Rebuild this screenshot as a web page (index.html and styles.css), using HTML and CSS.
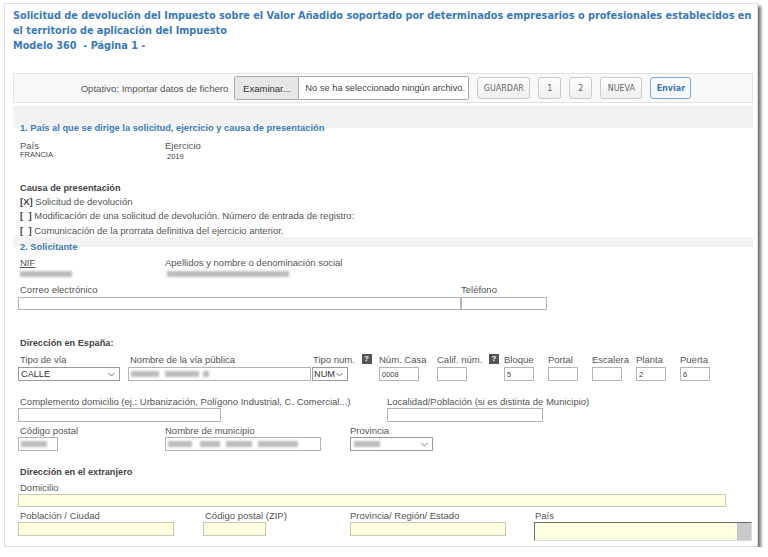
FILE: index.html
```html
<!DOCTYPE html>
<html lang="es">
<head>
<meta charset="utf-8">
<title>Modelo 360</title>
<link rel="stylesheet" href="styles.css">
</head>
<body>
<div class="frame">
  <div class="title">
    <div class="tline">Solicitud de devolución del Impuesto sobre el Valor Añadido soportado por determinados empresarios o profesionales establecidos en</div>
    <div class="tline">el territorio de aplicación del Impuesto</div>
    <div class="tline">Modelo 360 &nbsp;- Página 1 -</div>
  </div>

  <div class="toolbar">
    <span class="tb-label">Optativo: Importar datos de fichero</span>
    <div class="filebox"><span class="filebtn">Examinar...</span><span class="filetext">No se ha seleccionado ningún archivo.</span></div>
    <span class="btn w53">GUARDAR</span>
    <span class="btn w23">1</span>
    <span class="btn w23">2</span>
    <span class="btn w42">NUEVA</span>
    <span class="btn btn-primary w41">Enviar</span>
  </div>

  <div class="band band1"><span class="legend">1. País al que se dirige la solicitud, ejercicio y causa de presentación</span></div>
  <div class="content">
    <div class="grid-pais">
      <div class="lbl">País</div>
      <div class="lbl lbl0">Ejercicio</div>
      <div class="val">FRANCIA</div>
      <div class="val val2 lbl0">2019</div>
    </div>
    <div class="bold causa">Causa de presentación</div>
    <div class="opt"><b class="mark">[X]</b> Solicitud de devolución</div>
    <div class="opt"><b class="mark">[&nbsp; ]</b> Modificación de una solicitud de devolución. Número de entrada de registro:</div>
    <div class="opt"><b class="mark">[&nbsp; ]</b> Comunicación de la prorrata definitiva del ejercicio anterior.</div>
  </div>

  <div class="band band2"><span class="legend">2. Solicitante</span></div>
  <div class="content">
    <div class="grid-nif">
      <div class="lbl"><u>NIF</u></div>
      <div class="lbl lbl0">Apellidos y nombre o denominación social</div>
      <div class="blurrow"><span class="blur" style="width:52px"></span></div>
      <div class="blurrow lbl0"><span class="blur" style="width:122px"></span></div>
    </div>
    <div class="grid-mail">
      <div class="lbl">Correo electrónico</div>
      <div class="lbl lbl0">Teléfono</div>
      <div class="inp w443"></div>
      <div class="inp w86"></div>
    </div>

    <div class="bold sub1">Dirección en España:</div>
    <div class="grid-dir">
      <div class="lbl">Tipo de vía</div>
      <div class="lbl">Nombre de la vía pública</div>
      <div class="lbl lbl1">Tipo num. <span class="help">?</span></div>
      <div class="lbl lbl0">Núm. Casa</div>
      <div class="lbl lbl0">Calif. núm. <span class="help">?</span></div>
      <div class="lbl lbl0">Bloque</div>
      <div class="lbl lbl0">Portal</div>
      <div class="lbl lbl0">Escalera</div>
      <div class="lbl lbl0">Planta</div>
      <div class="lbl lbl0">Puerta</div>

      <div class="sel w102"><span class="seltext">CALLE</span><svg class="chev" width="7" height="5" viewBox="0 0 7 5"><polyline points="0.5,1 3.5,4 6.5,1" fill="none" stroke="#777" stroke-width="1"/></svg></div>
      <div class="inp w183 h14"><span class="blur" style="width:28px"></span><span class="blur" style="width:34px;margin-left:6px"></span><span class="blur" style="width:6px;margin-left:4px"></span></div>
      <div class="sel w36 selnum"><span class="seltext">NUM</span><svg class="chev" width="7" height="5" viewBox="0 0 7 5"><polyline points="0.5,1 3.5,4 6.5,1" fill="none" stroke="#777" stroke-width="1"/></svg></div>
      <div class="inp w40 h14 tiny">0008</div>
      <div class="inp w30 h14"></div>
      <div class="inp w30 h14 tiny">5</div>
      <div class="inp w30 h14"></div>
      <div class="inp w30 h14"></div>
      <div class="inp w30 h14 tiny">2</div>
      <div class="inp w30 h14 tiny">6</div>
    </div>

    <div class="grid-comp">
      <div class="lbl">Complemento domicilio (ej.: Urbanización, Polígono Industrial, C. Comercial...)</div>
      <div class="lbl lbl0">Localidad/Población (si es distinta de Municipio)</div>
      <div class="inp w203 h14"></div>
      <div class="inp w156 h14"></div>
    </div>

    <div class="grid-cp">
      <div class="lbl">Código postal</div>
      <div class="lbl lbl0">Nombre de municipio</div>
      <div class="lbl lbl0">Provincia</div>
      <div class="inp w40 h14"><span class="blur" style="width:26px"></span></div>
      <div class="inp w156 h14"><span class="blur" style="width:24px"></span><span class="blur" style="width:20px;margin-left:8px"></span><span class="blur" style="width:26px;margin-left:6px"></span><span class="blur" style="width:40px;margin-left:6px"></span></div>
      <div class="sel w83"><span class="blur" style="width:26px;margin-left:1px"></span><svg class="chev" width="7" height="5" viewBox="0 0 7 5"><polyline points="0.5,1 3.5,4 6.5,1" fill="none" stroke="#777" stroke-width="1"/></svg></div>
    </div>

    <div class="bold sub2">Dirección en el extranjero</div>
    <div class="lbl dom">Domicilio</div>
    <div class="inp yel w708 h13"></div>
    <div class="grid-ext">
      <div class="lbl">Población / Ciudad</div>
      <div class="lbl">Código postal (ZIP)</div>
      <div class="lbl lbl0">Provincia/ Región/ Estado</div>
      <div class="lbl lbl1">País</div>
      <div class="inp yel w156 h14"></div>
      <div class="inp yel w63 h14"></div>
      <div class="inp yel w156 h14"></div>
      <div class="cselect"><span class="carrow"></span></div>
    </div>
  </div>
</div>
</body>
</html>
```

FILE: styles.css
```css
* { box-sizing: border-box; }
html, body { margin: 0; padding: 0; background: #fff; }
body {
  font-family: "Liberation Sans", Arial, sans-serif;
  font-size: 9.5px;
  color: #555;
}
.frame {
  margin: 3px 0 0 4px;
  width: 754px;
  height: 544px;
  border: 1px solid #e0e0e0;
  box-shadow: 3px 3px 3px rgba(0,0,0,0.55);
  padding: 4px 4px 0 8px;
  background: #fff;
  overflow: hidden;
}
.title {
  font-family: "DejaVu Sans Condensed", "DejaVu Sans", sans-serif;
  font-weight: bold;
  font-size: 10.8px;
  line-height: 15px;
  color: #3b79b9;
  white-space: nowrap;
}
.toolbar {
  margin-top: 20px;
  height: 30px;
  border: 1px solid #e2e2e2;
  background: #f8f8f8;
  display: flex;
  align-items: center;
  justify-content: center;
  gap: 8px;
  padding-left: 6px;
}
.tb-label { font-size: 9.6px; color: #555; margin-right: -2px; white-space: nowrap; }
.filebox {
  width: 235px;
  height: 24px;
  border: 1px solid #a9a9a9;
  border-radius: 2px;
  background: #fff;
  display: flex;
  align-items: center;
}
.filebtn {
  width: 64px;
  height: 22px;
  background: #e7e7e7;
  border-right: 1px solid #aaa;
  display: flex;
  align-items: center;
  justify-content: center;
  color: #333;
  font-size: 9.5px;
}
.filetext { margin-left: 6px; color: #444; font-size: 9.3px; white-space: nowrap; }
.btn {
  height: 22px;
  border: 1px solid #cbcbcb;
  border-radius: 3px;
  background: linear-gradient(#fdfdfd, #efefef);
  display: flex;
  align-items: center;
  justify-content: center;
  font-family: "DejaVu Sans", sans-serif;
  font-size: 8px;
  color: #666;
}
.btn-primary { border-color: #7ea8d5; color: #3a78b8; font-weight: bold; background: linear-gradient(#fdfdfd, #f3f6fa); }
.w53 { width: 53px; } .w23 { width: 23px; } .w42 { width: 42px; } .w41 { width: 41px; }

.band {
  display: flex;
  align-items: flex-end;
  padding-left: 7px;
}
.band1 { margin-top: 3px; height: 28px; background: linear-gradient(#f2f2f2 0, #f2f2f2 22px, #fff 22px); }
.band2 { margin-top: -1px; height: 16px; background: linear-gradient(#f2f2f2 0, #f2f2f2 10px, #fff 10px); }
.legend {
  color: #3b79b9;
  font-weight: bold;
  font-size: 9.3px;
  line-height: 11px;
  white-space: nowrap;
}
.content { padding-left: 5px; }
.lbl { padding-left: 2px; line-height: 11px; white-space: nowrap; }
.lbl0 { padding-left: 0; }
.lbl1 { padding-left: 1px; }
.val { padding-left: 2px; font-size: 7.5px; line-height: 8px; color: #444; }
.val2 { padding-top: 2px; }
.bold { font-weight: bold; color: #444; padding-left: 2px; line-height: 13px; font-size: 9.2px; }

.grid-pais { display: grid; grid-template-columns: 147px 1fr; margin-top: 6px; }
.causa { margin-top: 21px; }
.opt { padding-left: 2px; line-height: 14.4px; }
.mark { color: #444; font-weight: bold; }

.grid-nif { display: grid; grid-template-columns: 147px 1fr; margin-top: 4px; }
.blurrow { padding-left: 2px; height: 10px; padding-top: 3px; }
.blur {
  display: inline-block;
  height: 6px;
  background: #bdbdbd;
  filter: blur(1px);
  vertical-align: top;
}
.grid-mail { display: grid; grid-template-columns: 443px 1fr; margin-top: 6px; }
.grid-mail .inp { margin-top: 2px; }
.inp {
  height: 13px;
  border: 1px solid #b4b4b4;
  background: #fff;
  display: flex;
  align-items: center;
  padding-left: 2px;
}
.h13 { height: 13px; } .h14 { height: 14px; }
.tiny { font-size: 7.5px; color: #444; }
.w443 { width: 443px; } .w86 { width: 86px; } .w102 { width: 102px; } .w183 { width: 183px; }
.w36 { width: 36px; } .w40 { width: 40px; } .w30 { width: 30px; } .w203 { width: 203px; }
.w156 { width: 156px; } .w83 { width: 83px; } .w708 { width: 708px; } .w63 { width: 63px; }

.sub1 { margin-top: 27px; }
.grid-dir {
  display: grid;
  grid-template-columns: 110px 184px 67px 58px 67px 44px 44px 44px 44px 40px;
  grid-template-rows: 11px 14px;
  row-gap: 2px;
  margin-top: 4px;
}
.help {
  display: inline-block;
  width: 10px;
  height: 10px;
  background: #555;
  color: #fff;
  font-weight: bold;
  font-size: 8px;
  line-height: 10px;
  text-align: center;
  margin-left: 4px;
  vertical-align: top;
}
.sel {
  height: 14px;
  border: 1px solid #9a9a9a;
  background: #fff;
  display: flex;
  align-items: center;
  padding-left: 2px;
  padding-right: 4px;
}
.selnum { padding-left: 1px; }
.seltext { color: #333; font-size: 9.2px; }
.chev { margin-left: auto; }

.grid-comp { display: grid; grid-template-columns: 369px 1fr; row-gap: 1px; margin-top: 15px; }
.grid-cp { display: grid; grid-template-columns: 147px 185px 1fr; row-gap: 1px; margin-top: 3px; }
.sub2 { margin-top: 15px; }
.dom { margin-top: 3px; }
.yel { background: #fefee0; border-color: #c9c9b4; margin-top: 1px; }
.grid-ext { display: grid; grid-template-columns: 185px 147px 184px 1fr; margin-top: 3px; align-items: start; }
.cselect {
  width: 218px;
  height: 19px;
  background: #fefee0;
  border-top: 1px solid #6a6a6a;
  border-left: 1px solid #6a6a6a;
  border-bottom: 1px solid #ddd;
  border-right: 1px solid #ddd;
  display: flex;
  justify-content: flex-end;
  align-items: stretch;
  margin-top: 1px;
}
.carrow { width: 14px; background: #c9c9c9; border-left: 1px solid #bbb; }
```
